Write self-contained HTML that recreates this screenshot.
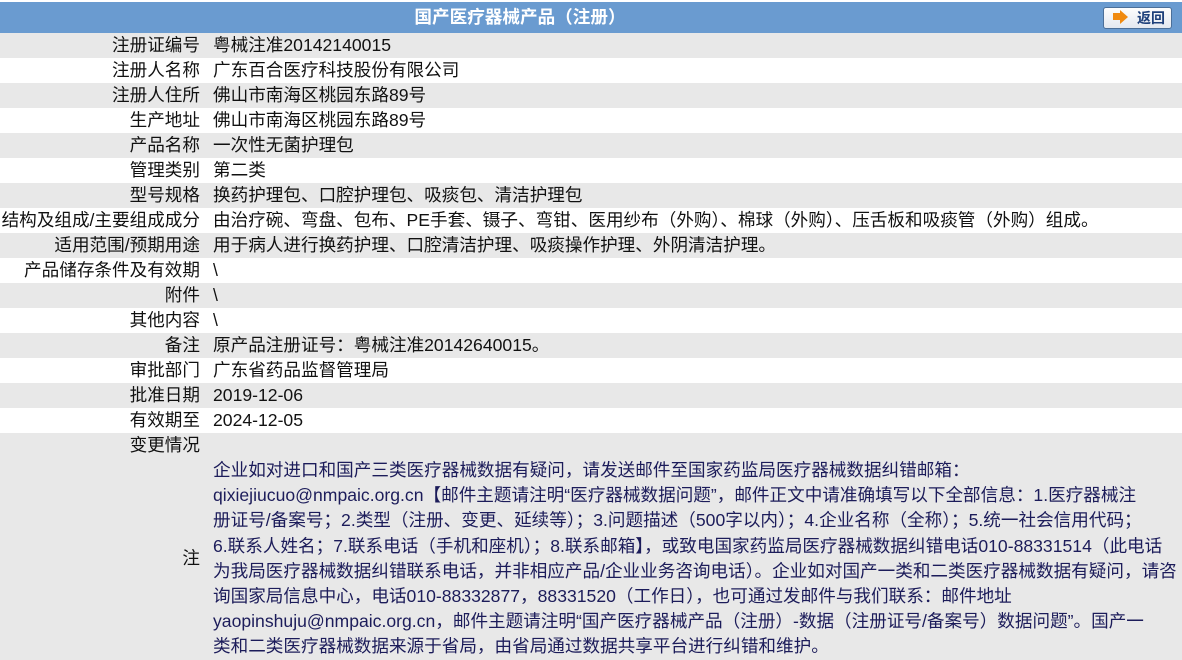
<!DOCTYPE html>
<html><head><meta charset="utf-8"><style>
body{margin:0;width:1182px;height:660px;overflow:hidden;background:#fff;font-family:"Liberation Sans","Noto Sans CJK SC",sans-serif;font-size:17.6px;color:#111;}
.hd{position:absolute;left:0;top:2px;width:1182px;height:31px;background:#6a9bd0;}
.hd .t{position:absolute;left:0;width:1040px;text-align:center;top:0;line-height:31px;color:#fff;font-weight:bold;font-size:17.6px;}
.btn{position:absolute;left:1103px;top:5px;width:67px;height:20px;background:linear-gradient(#fdfdfd,#e4e9f0);border:1px solid #4b6f99;border-radius:3px;}
.btn .ar{position:absolute;left:9px;top:5px;width:7px;height:7px;background:#f08a10;}
.btn .ar2{position:absolute;left:16px;top:2px;width:0;height:0;border-top:7px solid transparent;border-bottom:7px solid transparent;border-left:8px solid #f08a10;}
.btn .tx{position:absolute;left:33px;top:0;line-height:20px;font-size:14px;font-weight:bold;color:#1d3f7a;}
.r{position:absolute;left:0;width:1182px;height:25px;line-height:25px;white-space:nowrap;}
.g{background:#e8e8e8;}
.l{position:absolute;right:982px;top:0;text-align:right;}
.v{position:absolute;left:213px;top:0;}
.note{position:absolute;left:213px;top:458px;line-height:25.2px;color:#1c1c5a;white-space:nowrap;}
</style></head><body>
<div class="hd"><div class="t">国产医疗器械产品（注册）</div>
<div class="btn"><div class="ar"></div><div class="ar2"></div><div class="tx">返回</div></div></div>
<div class="r g" style="top:33px"><span class="l">注册证编号</span><span class="v">粤械注准20142140015</span></div>
<div class="r" style="top:58px"><span class="l">注册人名称</span><span class="v">广东百合医疗科技股份有限公司</span></div>
<div class="r g" style="top:83px"><span class="l">注册人住所</span><span class="v">佛山市南海区桃园东路89号</span></div>
<div class="r" style="top:108px"><span class="l">生产地址</span><span class="v">佛山市南海区桃园东路89号</span></div>
<div class="r g" style="top:133px"><span class="l">产品名称</span><span class="v">一次性无菌护理包</span></div>
<div class="r" style="top:158px"><span class="l">管理类别</span><span class="v">第二类</span></div>
<div class="r g" style="top:183px"><span class="l">型号规格</span><span class="v">换药护理包、口腔护理包、吸痰包、清洁护理包</span></div>
<div class="r" style="top:208px"><span class="l">结构及组成/主要组成成分</span><span class="v">由治疗碗、弯盘、包布、PE手套、镊子、弯钳、医用纱布（外购）、棉球（外购）、压舌板和吸痰管（外购）组成。</span></div>
<div class="r g" style="top:233px"><span class="l">适用范围/预期用途</span><span class="v">用于病人进行换药护理、口腔清洁护理、吸痰操作护理、外阴清洁护理。</span></div>
<div class="r" style="top:258px"><span class="l">产品储存条件及有效期</span><span class="v">\</span></div>
<div class="r g" style="top:283px"><span class="l">附件</span><span class="v">\</span></div>
<div class="r" style="top:308px"><span class="l">其他内容</span><span class="v">\</span></div>
<div class="r g" style="top:333px"><span class="l">备注</span><span class="v">原产品注册证号：粤械注准20142640015。</span></div>
<div class="r" style="top:358px"><span class="l">审批部门</span><span class="v">广东省药品监督管理局</span></div>
<div class="r g" style="top:383px"><span class="l">批准日期</span><span class="v">2019-12-06</span></div>
<div class="r" style="top:408px"><span class="l">有效期至</span><span class="v">2024-12-05</span></div>
<div class="r g" style="top:433px;height:227px"><span class="l">变更情况</span><span class="l" style="top:113px">注</span></div>
<div class="note">企业如对进口和国产三类医疗器械数据有疑问，请发送邮件至国家药监局医疗器械数据纠错邮箱：<br>qixiejiucuo@nmpaic.org.cn【邮件主题请注明“医疗器械数据问题”，邮件正文中请准确填写以下全部信息：1.医疗器械注<br>册证号/备案号；2.类型（注册、变更、延续等）；3.问题描述（500字以内）；4.企业名称（全称）；5.统一社会信用代码；<br>6.联系人姓名；7.联系电话（手机和座机）；8.联系邮箱】，或致电国家药监局医疗器械数据纠错电话010-88331514（此电话<br>为我局医疗器械数据纠错联系电话，并非相应产品/企业业务咨询电话）。企业如对国产一类和二类医疗器械数据有疑问，请咨<br>询国家局信息中心，电话010-88332877，88331520（工作日），也可通过发邮件与我们联系：邮件地址<br>yaopinshuju@nmpaic.org.cn，邮件主题请注明“国产医疗器械产品（注册）-数据（注册证号/备案号）数据问题”。国产一<br>类和二类医疗器械数据来源于省局，由省局通过数据共享平台进行纠错和维护。</div>
</body></html>
